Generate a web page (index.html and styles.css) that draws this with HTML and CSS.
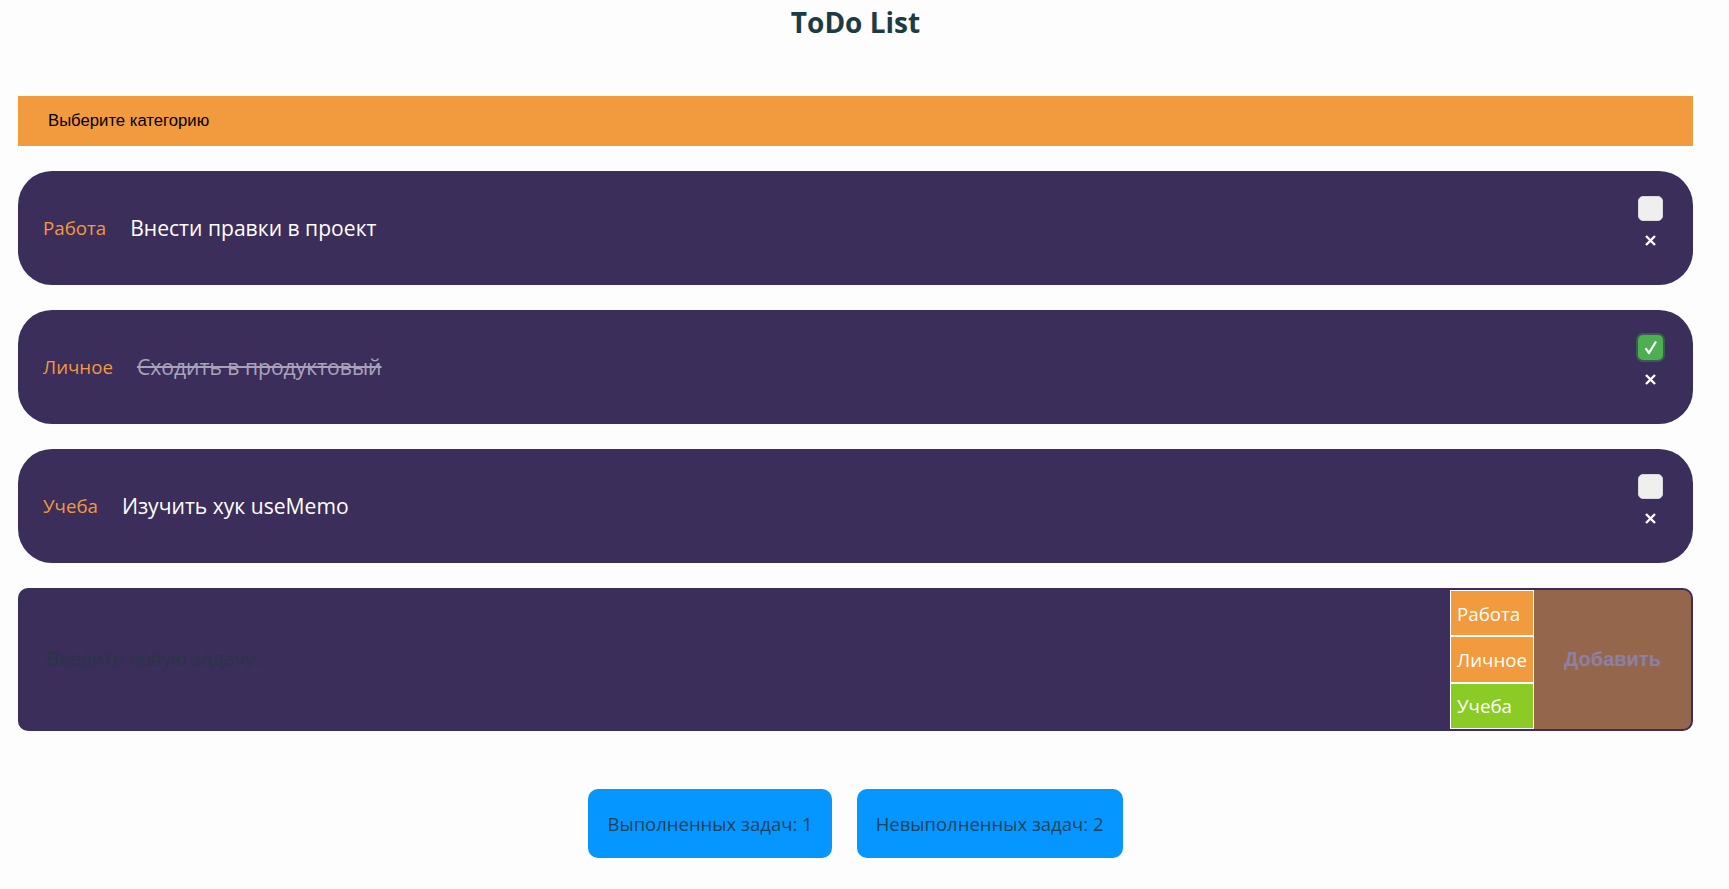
FILE: index.html
```html
<!DOCTYPE html>
<html lang="ru">
<head>
<meta charset="utf-8">
<title>ToDo List</title>
<link rel="stylesheet" href="styles.css">
</head>
<body>
<div class="app">
  <h1 class="title">ToDo List</h1>

  <div class="filter">Выберите категорию</div>

  <ul class="tasks">
    <li class="task">
      <span class="task-cat">Работа</span>
      <span class="task-text">Внести правки в проект</span>
      <div class="task-controls">
        <span class="check"></span>
        <span class="remove"><svg width="11" height="11" viewBox="0 0 11 11"><path d="M1 1L10 10M10 1L1 10" stroke="#fff" stroke-width="2.4"/></svg></span>
      </div>
    </li>
    <li class="task">
      <span class="task-cat">Личное</span>
      <span class="task-text done">Сходить в продуктовый</span>
      <div class="task-controls">
        <span class="check checked"><svg width="17" height="17" viewBox="0 0 17 17"><path d="M3.5 9.2L7 14L14 2.5" fill="none" stroke="#fff" stroke-width="2.2" stroke-linejoin="round"/></svg></span>
        <span class="remove"><svg width="11" height="11" viewBox="0 0 11 11"><path d="M1 1L10 10M10 1L1 10" stroke="#fff" stroke-width="2.4"/></svg></span>
      </div>
    </li>
    <li class="task">
      <span class="task-cat">Учеба</span>
      <span class="task-text">Изучить хук useMemo</span>
      <div class="task-controls">
        <span class="check"></span>
        <span class="remove"><svg width="11" height="11" viewBox="0 0 11 11"><path d="M1 1L10 10M10 1L1 10" stroke="#fff" stroke-width="2.4"/></svg></span>
      </div>
    </li>
  </ul>

  <div class="new-task">
    <input class="new-input" type="text" placeholder="Введите новую задачу...">
    <div class="cat-list">
      <div class="cat-item">Работа</div>
      <div class="cat-item">Личное</div>
      <div class="cat-item active">Учеба</div>
    </div>
    <button class="add-btn">Добавить</button>
  </div>

  <div class="stats">
    <button class="stat-btn">Выполненных задач: 1</button>
    <button class="stat-btn">Невыполненных задач: 2</button>
  </div>
</div>
</body>
</html>
```

FILE: styles.css
```css
* { box-sizing: border-box; }

body {
  margin: 0;
  background: #fdfdfd;
  color: #213547;
  font-family: "Open Sans", "Noto Sans", sans-serif;
}

.app {
  margin: 0 36px 0 18px;
  display: flex;
  flex-direction: column;
}

.title {
  margin: 0 0 55px;
  padding-top: 3px;
  text-align: center;
  font-size: 28px;
  line-height: 38px;
  font-weight: 700;
  color: #1e3a44;
}

.filter {
  height: 50px;
  background: #f19a3e;
  display: flex;
  align-items: center;
  padding-left: 30px;
  font-family: "Liberation Sans", Arial, sans-serif;
  font-size: 16.7px;
  color: #000;
}

.tasks {
  list-style: none;
  margin: 25px 0 0;
  padding: 0;
  display: flex;
  flex-direction: column;
  gap: 25px;
}

.task {
  height: 114px;
  background: #3b2e5a;
  border-radius: 34px;
  display: flex;
  align-items: center;
  padding: 0 30px 0 25px;
}

.task-cat {
  color: #f19a3e;
  font-size: 18.7px;
  margin-right: 24px;
  margin-top: -2px;
}

.task-text {
  color: #fff;
  font-size: 21.1px;
  flex: 1;
  margin-top: -2px;
}

.task-text.done {
  color: #a9a3b9;
  text-decoration: line-through;
}

.task-controls {
  align-self: flex-start;
  margin-top: 25px;
  display: flex;
  flex-direction: column;
  align-items: center;
  gap: 14px;
}

.check {
  width: 25px;
  height: 25px;
  border-radius: 5px;
  background: #efefef;
  border: 1px solid #d9d9d9;
  display: flex;
  align-items: center;
  justify-content: center;
}

.check.checked {
  background: #4caf50;
  border: none;
  box-shadow: 0 0 0 2px #3e5a55;
}

.remove {
  display: flex;
  width: 11px;
  height: 11px;
}

.new-task {
  margin-top: 25px;
  height: 143px;
  border: 2px solid #3b2e5a;
  border-radius: 10px;
  background: #3b2e5a;
  display: flex;
  overflow: hidden;
}

.new-input {
  flex: 1;
  border: none;
  outline: none;
  background: transparent;
  padding: 0 0 0 26px;
  font-family: "Liberation Sans", Arial, sans-serif;
  font-size: 20px;
  color: #fff;
}

.new-input::placeholder {
  color: #2b3548;
}

.cat-list {
  display: flex;
  flex-direction: column;
}

.cat-item {
  flex: 1;
  display: flex;
  align-items: center;
  padding: 0 6px;
  border: 1px solid #fff;
  background: #f19a3e;
  color: #fff;
  font-size: 18.7px;
}

.cat-item.active {
  background: #8bcb25;
}

.add-btn {
  width: 157px;
  border: none;
  background: #94674d;
  color: #8b81a4;
  font-family: "Liberation Sans", Arial, sans-serif;
  font-weight: 700;
  font-size: 20px;
  padding: 0;
}

.stats {
  margin-top: 58px;
  display: flex;
  justify-content: center;
  gap: 25px;
}

.stat-btn {
  height: 69px;
  padding: 0 19px;
  border: none;
  border-radius: 10px;
  background: #0596ff;
  color: #1e4358;
  font-family: "Open Sans", "Noto Sans", sans-serif;
  font-size: 18.5px;
}
```
